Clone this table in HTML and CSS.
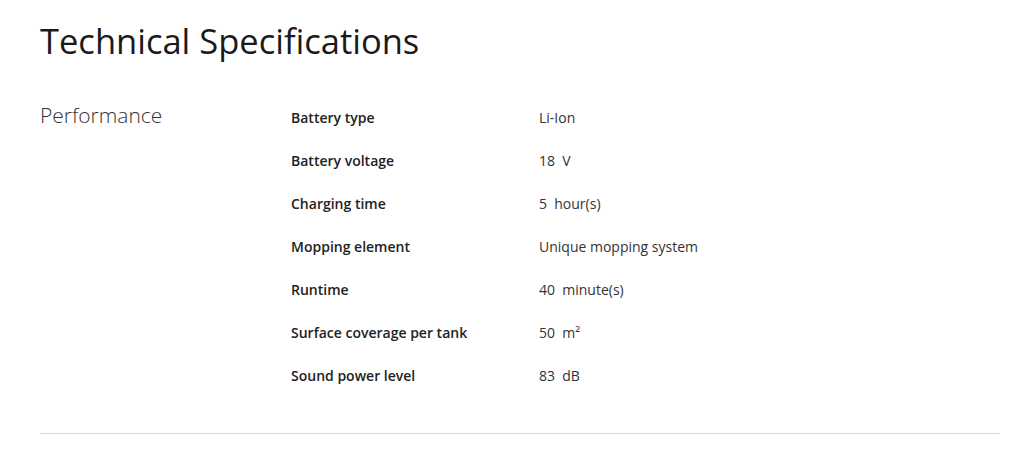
FILE: index.html
```html
<!DOCTYPE html>
<html>
<head>
<meta charset="utf-8">
<link rel="stylesheet" href="styles.css">
</head>
<body>
<div class="page">
  <h1 class="title">Technical Specifications</h1>
  <div class="section">
    <h2 class="section-name">Performance</h2>
    <div class="specs">
      <div class="row"><div class="label">Battery type</div><div class="value">Li-Ion</div></div>
      <div class="row"><div class="label">Battery voltage</div><div class="value">18&nbsp; V</div></div>
      <div class="row"><div class="label">Charging time</div><div class="value">5&nbsp; hour(s)</div></div>
      <div class="row"><div class="label">Mopping element</div><div class="value">Unique mopping system</div></div>
      <div class="row"><div class="label">Runtime</div><div class="value">40&nbsp; minute(s)</div></div>
      <div class="row"><div class="label">Surface coverage per tank</div><div class="value">50&nbsp; m²</div></div>
      <div class="row"><div class="label">Sound power level</div><div class="value">83&nbsp; dB</div></div>
    </div>
  </div>
</div>
</body>
</html>
```
FILE: styles.css
```css
html, body { margin: 0; padding: 0; background: #fff; }
body { font-family: "Open Sans", "Liberation Sans", sans-serif; color: #1a1a1a; }
.page { padding: 0 24px 0 40px; }
.title {
  margin: 0;
  padding-top: 19px;
  font-family: "Open Sans", sans-serif;
  font-weight: 400;
  font-size: 34.5px;
  line-height: 44px;
  color: #1a1a1a;
  letter-spacing: 0;
}
.section {
  display: grid;
  grid-template-columns: 251px 1fr;
  margin-top: 40px;
  padding-bottom: 24px;
  border-bottom: 1px solid #d8d8d8;
}
.section-name {
  margin: 0;
  font-weight: 300;
  font-size: 21px;
  line-height: 24px;
  color: #333;
}
.specs { display: flex; flex-direction: column; padding-top: 5px; }
.row {
  display: grid;
  grid-template-columns: 248px 1fr;
  height: 43px;
  font-size: 14px;
  line-height: 20px;
}
.label { font-weight: 600; color: #222; }
.value { color: #333; }
```
